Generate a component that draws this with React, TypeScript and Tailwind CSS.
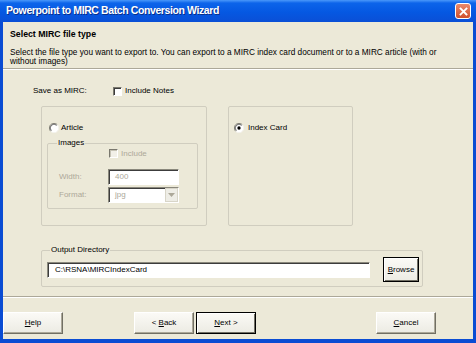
import React from 'react';

const face = "font-['Liberation_Sans',Arial,sans-serif]";

function Radio({ checked }: { checked?: boolean }) {
  return (
    <svg width="10" height="10" viewBox="0 0 12 12" className="shrink-0">
      <circle cx="6" cy="6" r="5.5" fill="#ffffff" />
      <path d="M10 2 A5.5 5.5 0 0 0 2 10" fill="none" stroke="#8a887c" strokeWidth="1.2" />
      <path d="M9.2 2.8 A4.5 4.5 0 0 0 2.8 9.2" fill="none" stroke="#3c3c3c" strokeWidth="1" />
      <path d="M10 2 A5.5 5.5 0 0 1 2 10" fill="none" stroke="#f4f3ee" strokeWidth="1.2" />
      {checked && <circle cx="6" cy="6" r="2" fill="#000000" />}
    </svg>
  );
}

function Check({ disabled }: { disabled?: boolean }) {
  return (
    <div
      className={`w-[9px] h-[9px] shrink-0 border border-t-[#7a786e] border-l-[#7a786e] border-r-white border-b-white ${
        disabled ? 'bg-[#f2f0e8] shadow-[inset_1px_1px_0_#c5c2b4]' : 'bg-white shadow-[inset_1px_1px_0_#3c3c3c]'
      }`}
    />
  );
}

function Btn({ label, u, def, className = '' }: { label: string; u: number; def?: boolean; className?: string }) {
  return (
    <div
      className={`h-[22px] flex items-center justify-center text-[8px] text-black bg-[linear-gradient(to_bottom,#fbfaf6,#ecebe3)] ${
        def
          ? 'border border-black shadow-[inset_1px_1px_0_#ffffff,inset_-1px_-1px_0_#716f64]'
          : 'border border-t-white border-l-white border-r-[#716f64] border-b-[#716f64] shadow-[inset_-1px_-1px_0_#aca899]'
      } ${className}`}
    >
      <span>
        {label.slice(0, u)}
        <span className="underline">{label[u]}</span>
        {label.slice(u + 1)}
      </span>
    </div>
  );
}

export default function App() {
  return (
    <div className={`w-[476px] h-[343px] flex flex-col bg-[#0a4cd3] overflow-hidden ${face}`}>
      {/* Title bar */}
      <div className="h-[22px] shrink-0 flex items-center justify-between pl-[6px] pr-[5px] bg-[linear-gradient(to_bottom,#4a98fa_0%,#0c64ea_14%,#0558e2_55%,#0a4fd6_100%)]">
        <span className="text-white font-bold text-[10.5px] tracking-[-0.4px] [text-shadow:1px_1px_0_#0a2f8a]">
          Powerpoint to MIRC Batch Conversion Wizard
        </span>
        <div className="w-[16px] h-[16px] rounded-[3px] border border-white bg-[linear-gradient(to_bottom,#e9896b,#d0502d)] flex items-center justify-center">
          <svg width="9" height="9" viewBox="0 0 9 9">
            <path d="M1.5 1.5 L7.5 7.5 M7.5 1.5 L1.5 7.5" stroke="#ffffff" strokeWidth="1.8" strokeLinecap="square" />
          </svg>
        </div>
      </div>

      {/* Client area */}
      <div className="flex-1 mx-[3px] mb-[4px] bg-[#ece9d8] flex flex-col text-black">
        {/* Header */}
        <div className="h-[46px] shrink-0 pt-[5px] pl-[7px]">
          <div className="font-bold text-[8.75px] leading-[14px]">Select MIRC file type</div>
          <div className="mt-[7px] text-[8.25px] leading-[9px]">
            Select the file type you want to export to. You can export to a MIRC index card document or to a MIRC article (with or
            <br />
            without images)
          </div>
        </div>
        <div className="h-[2px] border-t border-[#aca899] border-b border-b-white" />

        {/* Save as row */}
        <div className="mt-[15px] h-[12px] flex items-center pl-[30px] text-[8px]">
          <span className="w-[80px]">Save as MIRC:</span>
          <Check />
          <span className="ml-[3px]">Include Notes</span>
        </div>

        {/* Type groups */}
        <div className="mt-[9px] flex pl-[38px] gap-[21px]">
          <div className="w-[166px] h-[120px] border border-[#d0cdbf] rounded-[2px] flex flex-col">
            <div className="mt-[15px] h-[12px] flex items-center pl-[7px] gap-[2px] text-[8px]">
              <Radio />
              <span>Article</span>
            </div>
            <div className="relative mt-[9px] ml-[5px] w-[151px] h-[66px] border border-[#d0cdbf] rounded-[2px] text-[8px] text-[#aca899]">
              <span className="absolute -top-[6px] left-[9px] px-[1px] bg-[#ece9d8] text-black leading-[10px]">Images</span>
              <div className="mt-[5px] h-[9px] flex items-center pl-[61px] gap-[3px]">
                <Check disabled />
                <span>Include</span>
              </div>
              <div className="mt-[11px] h-[16px] flex items-center pl-[11px]">
                <span className="w-[49px]">Width:</span>
                <div className="w-[71px] h-[16px] bg-white border border-t-[#8a887c] border-l-[#8a887c] border-r-white border-b-white shadow-[inset_1px_1px_0_#3c3c3c] flex items-center pl-[6px]">
                  400
                </div>
              </div>
              <div className="mt-[2px] h-[16px] flex items-center pl-[11px]">
                <span className="w-[49px]">Format:</span>
                <div className="w-[71px] h-[16px] bg-white border border-t-[#8a887c] border-l-[#8a887c] border-r-white border-b-white shadow-[inset_1px_1px_0_#3c3c3c] flex items-center justify-between pl-[6px]">
                  <span>jpg</span>
                  <div className="w-[13px] h-[14px] bg-[#eeede6] border border-[#d8d5c8] flex items-center justify-center">
                    <svg width="7" height="4" viewBox="0 0 7 4">
                      <path d="M0 0 L7 0 L3.5 4 Z" fill="#aca899" />
                    </svg>
                  </div>
                </div>
              </div>
            </div>
          </div>
          <div className="w-[125px] h-[120px] border border-[#d0cdbf] rounded-[2px]">
            <div className="mt-[15px] h-[12px] flex items-center pl-[5px] gap-[4px] text-[8px]">
              <Radio checked />
              <span>Index Card</span>
            </div>
          </div>
        </div>

        {/* Output directory */}
        <div className="relative mt-[24px] ml-[38px] w-[382px] h-[37px] border border-[#d0cdbf] rounded-[2px] flex items-center pt-[2px] text-[8px]">
          <span className="absolute -top-[6px] left-[8px] px-[1px] bg-[#ece9d8] leading-[10px]">Output Directory</span>
          <div className="ml-[5px] w-[323px] h-[16px] bg-white border border-t-[#8a887c] border-l-[#8a887c] border-r-white border-b-white shadow-[inset_1px_1px_0_#3c3c3c] flex items-center pl-[7px]">
            C:\RSNA\MIRCIndexCard
          </div>
          <Btn label="Browse" u={0} def className="ml-[13px] w-[36px] !h-[25px]" />
        </div>

        <div className="mt-[9px] h-[2px] border-t border-[#aca899] border-b border-b-white" />

        {/* Buttons */}
        <div className="mt-[14px] flex">
          <Btn label="Help" u={0} className="w-[60px]" />
          <Btn label="< Back" u={2} className="ml-[71px] w-[60px]" />
          <Btn label="Next >" u={0} def className="ml-[2px] w-[60px]" />
          <Btn label="Cancel" u={0} className="ml-[120px] w-[60px]" />
        </div>
      </div>
    </div>
  );
}
